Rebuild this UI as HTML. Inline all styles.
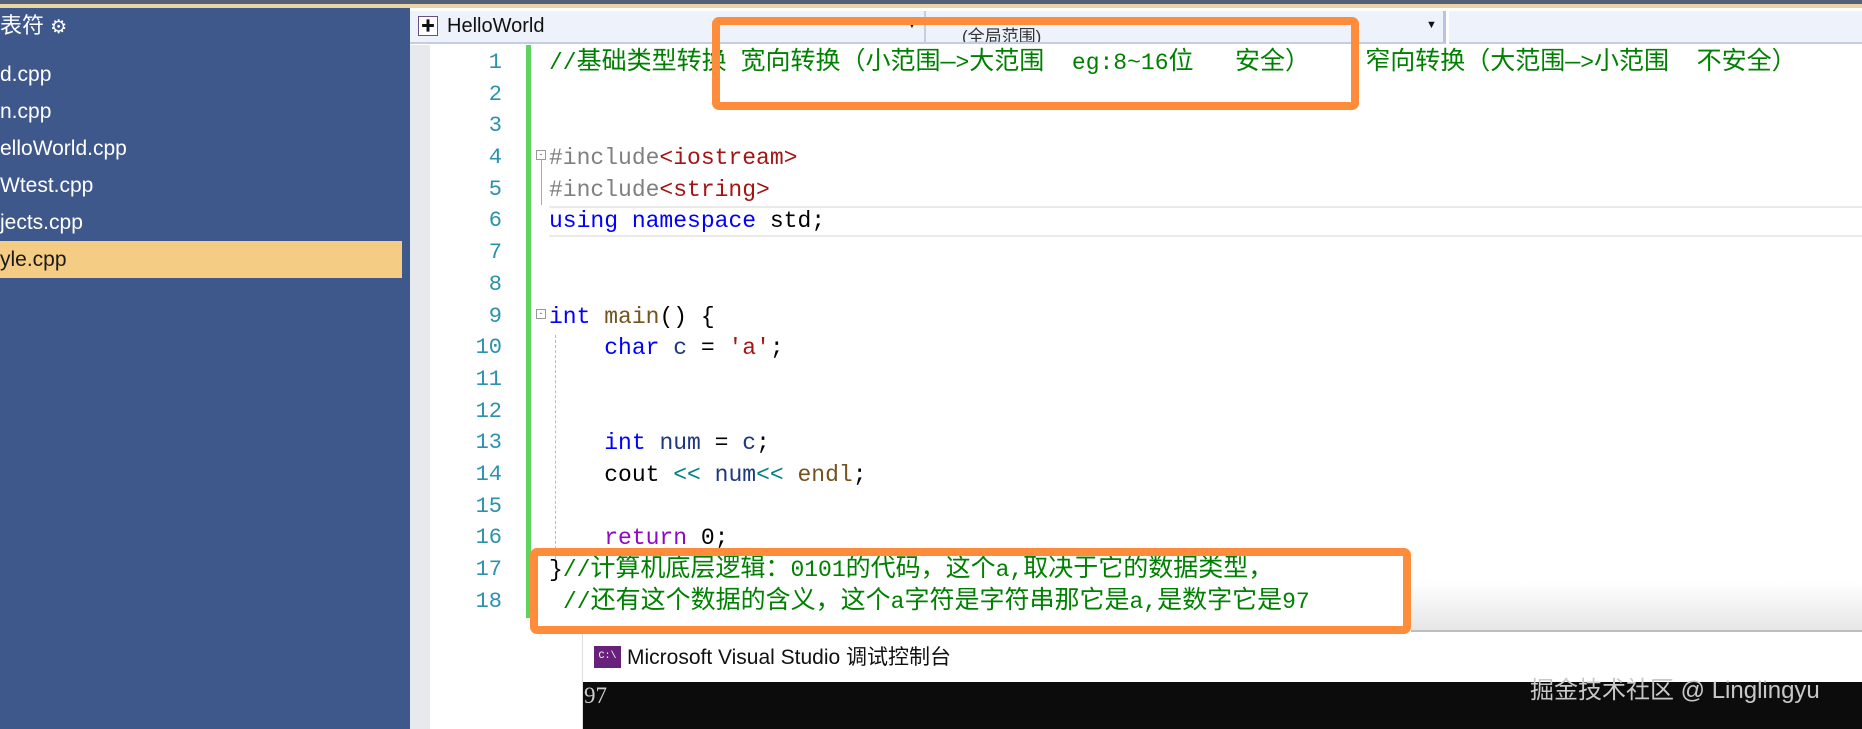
<!DOCTYPE html>
<html><head><meta charset="utf-8"><style>
*{margin:0;padding:0;box-sizing:border-box}
body{width:1862px;height:729px;overflow:hidden;background:#fff;position:relative;font-family:"Liberation Sans","Noto Sans CJK SC",sans-serif}
.a{position:absolute}
.side{left:0;top:0;width:410px;height:729px;background:#3f588b}
.f{position:absolute;left:0;color:#fff;font-size:21px;line-height:37px;height:37px;width:402px;white-space:nowrap}
.combo{top:11px;height:33px;background:#eef2fb;border-bottom:2px solid #c5cde3;font-size:20px;line-height:31px;color:#111;overflow:hidden}
.ln{position:absolute;left:430px;width:72px;text-align:right;color:#2b91af;font-family:"Liberation Mono",monospace;font-size:22px;line-height:32px}
.cd{position:absolute;left:549px;white-space:pre;font-family:"Liberation Mono","Noto Sans CJK SC",monospace;font-size:23px;line-height:32px;color:#000}
.z{font-size:25px}
.g{color:#008000}.k{color:#0000ff}.p{color:#808080}.s{color:#a31515}.m{color:#74531f}.r{color:#8f08c4}.t{color:#008080}.v{color:#1f377f}
.box{border:8px solid #ff8c3a;border-radius:7px}
</style></head><body>
<div class="a" style="left:0;top:0;width:1862px;height:4px;background:#566078"></div>
<div class="a" style="left:0;top:4px;width:1862px;height:4px;background:#e9d5a5"></div>
<div class="a side" style="top:8px;height:721px"></div>
<div class="a" style="left:0;top:9px;color:#fff;font-size:22px;line-height:34px">表符 <span style="font-size:19px">⚙</span></div>
<div class="f" style="top:56px">d.cpp</div>
<div class="f" style="top:93px">n.cpp</div>
<div class="f" style="top:130px">elloWorld.cpp</div>
<div class="f" style="top:167px">Wtest.cpp</div>
<div class="f" style="top:204px">jects.cpp</div>
<div class="f" style="top:241px;background:#f5cc84;color:#1a1a1a">yle.cpp</div>

<div class="a combo" style="left:410px;width:516px;border-right:2px solid #c5cde3">
 <span class="a" style="left:8px;top:5px;width:20px;height:20px;border:1px solid #6a4f86;background:#fff;font-size:14px;line-height:18px;text-align:center">✚</span>
 <span class="a" style="left:37px;top:0">HelloWorld</span>
 <span class="a" style="left:497px;top:-1px;font-size:10px">▼</span>
</div>
<div class="a combo" style="left:926px;width:520px;border-right:3px solid #b9c3dd">
 <span class="a" style="left:36px;top:10px;font-size:17px;color:#333">(全局范围)</span>
 <span class="a" style="left:500px;top:-1px;font-size:11px">▼</span>
</div>
<div class="a combo" style="left:1449px;width:413px"></div>

<div class="a" style="left:410px;top:45px;width:20px;height:684px;background:#e8e9ec"></div>
<div class="a" style="left:526px;top:45px;width:5px;height:573px;background:#5fd35f"></div>
<div class="a" style="left:549px;top:206px;width:1313px;height:31px;border-top:2px solid #eaeaea;border-bottom:2px solid #eaeaea"></div>
<div class="a" style="left:555px;top:335px;height:224px;border-left:1px dashed #bbb"></div>
<div class="a" style="left:536px;top:150px;width:10px;height:10px;border:1px solid #999;font-size:9px;line-height:7px;text-align:center;color:#555">-</div>
<div class="a" style="left:536px;top:309px;width:10px;height:10px;border:1px solid #999;font-size:9px;line-height:7px;text-align:center;color:#555">-</div>
<div class="a" style="left:541px;top:160px;height:45px;border-left:1px solid #aaa"></div>

<div class="ln" style="top:47px">1</div><div class="ln" style="top:79px">2</div><div class="ln" style="top:110px">3</div>
<div class="ln" style="top:142px">4</div><div class="ln" style="top:174px">5</div><div class="ln" style="top:205px">6</div>
<div class="ln" style="top:237px">7</div><div class="ln" style="top:269px">8</div><div class="ln" style="top:301px">9</div>
<div class="ln" style="top:332px">10</div><div class="ln" style="top:364px">11</div><div class="ln" style="top:396px">12</div>
<div class="ln" style="top:427px">13</div><div class="ln" style="top:459px">14</div><div class="ln" style="top:491px">15</div>
<div class="ln" style="top:522px">16</div><div class="ln" style="top:554px">17</div><div class="ln" style="top:586px">18</div>

<div class="cd g" style="top:47px">//<span class="z">基础类型转换</span> <span class="z">宽向转换（小范围—</span>&gt;<span class="z">大范围</span>  eg:8~16<span class="z">位</span>   <span class="z">安全）</span>    <span class="z">窄向转换（大范围—</span>&gt;<span class="z">小范围</span>  <span class="z">不安全）</span></div>
<div class="cd" style="top:142px"><span class="p">#include</span><span class="s">&lt;iostream&gt;</span></div>
<div class="cd" style="top:174px"><span class="p">#include</span><span class="s">&lt;string&gt;</span></div>
<div class="cd" style="top:205px"><span class="k">using</span> <span class="k">namespace</span> std;</div>
<div class="cd" style="top:301px"><span class="k">int</span> <span class="m">main</span>() {</div>
<div class="cd" style="top:332px">    <span class="k">char</span> <span class="v">c</span> = <span class="s">'a'</span>;</div>
<div class="cd" style="top:427px">    <span class="k">int</span> <span class="v">num</span> = <span class="v">c</span>;</div>
<div class="cd" style="top:459px">    cout <span class="t">&lt;&lt;</span> <span class="v">num</span><span class="t">&lt;&lt;</span> <span class="m">endl</span>;</div>
<div class="cd" style="top:522px">    <span class="r">return</span> 0;</div>
<div class="cd" style="top:554px">}<span class="g">//<span class="z">计算机底层逻辑：</span>0101<span class="z">的代码，这个</span>a,<span class="z">取决于它的数据类型，</span></span></div>
<div class="cd g" style="top:586px;left:563px">//<span class="z">还有这个数据的含义，这个</span>a<span class="z">字符是字符串那它是</span>a,<span class="z">是数字它是</span>97</div>

<div class="a" style="left:1411px;top:582px;width:451px;height:50px;background:linear-gradient(#fff,#e6e6e6);border-bottom:2px solid #bdbdbd"></div>
<div class="a" style="left:582px;top:634px;width:1280px;height:95px;background:#fff;border-left:1px solid #ddd"></div>
<div class="a" style="left:583px;top:682px;width:1279px;height:47px;background:#0c0c0c"></div>
<div class="a" style="left:594px;top:646px;width:27px;height:22px;background:#68217a;color:#fff;font-size:10px;line-height:22px;text-align:center;font-family:'Liberation Mono',monospace">C:\</div>
<div class="a" style="left:627px;top:641px;font-size:21px;line-height:34px;color:#111">Microsoft Visual Studio 调试控制台</div>
<div class="a" style="left:584px;top:683px;font-family:'Liberation Serif',serif;font-size:23px;color:#ccc">97</div>
<div class="a" style="left:1530px;top:673px;font-size:24px;line-height:36px;color:#c8c8c8">掘金技术社区 @ Linglingyu</div>

<div class="a box" style="left:712px;top:17px;width:647px;height:93px"></div>
<div class="a box" style="left:530px;top:548px;width:881px;height:86px"></div>
</body></html>
